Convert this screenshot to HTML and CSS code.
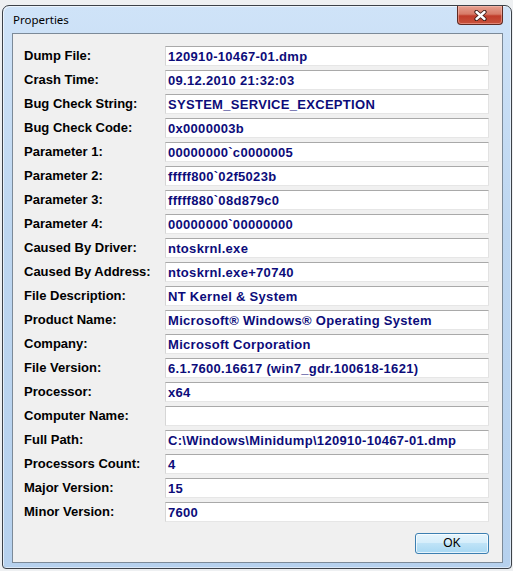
FILE: index.html
```html
<!DOCTYPE html>
<html>
<head>
<meta charset="utf-8">
<link rel="stylesheet" href="styles.css">
</head>
<body>
<div class="window">
  <div class="titlebar">
    <span class="title">Properties</span>
    <div class="close">
      <svg width="15" height="11" viewBox="0 0 15 11">
        <path d="M3.5 2 L11.5 9 M11.5 2 L3.5 9" stroke="#3a1a14" stroke-width="4.2" stroke-linecap="round"/>
        <path d="M3.5 2 L11.5 9 M11.5 2 L3.5 9" stroke="#ffffff" stroke-width="2.4" stroke-linecap="round"/>
      </svg>
    </div>
  </div>
  <div class="client">
    <div class="grid">
      <div class="label">Dump File:</div><div class="field">120910-10467-01.dmp</div>
      <div class="label">Crash Time:</div><div class="field">09.12.2010 21:32:03</div>
      <div class="label">Bug Check String:</div><div class="field">SYSTEM_SERVICE_EXCEPTION</div>
      <div class="label">Bug Check Code:</div><div class="field">0x0000003b</div>
      <div class="label">Parameter 1:</div><div class="field">00000000`c0000005</div>
      <div class="label">Parameter 2:</div><div class="field">fffff800`02f5023b</div>
      <div class="label">Parameter 3:</div><div class="field">fffff880`08d879c0</div>
      <div class="label">Parameter 4:</div><div class="field">00000000`00000000</div>
      <div class="label">Caused By Driver:</div><div class="field">ntoskrnl.exe</div>
      <div class="label">Caused By Address:</div><div class="field">ntoskrnl.exe+70740</div>
      <div class="label">File Description:</div><div class="field">NT Kernel &amp; System</div>
      <div class="label">Product Name:</div><div class="field">Microsoft® Windows® Operating System</div>
      <div class="label">Company:</div><div class="field">Microsoft Corporation</div>
      <div class="label">File Version:</div><div class="field">6.1.7600.16617 (win7_gdr.100618-1621)</div>
      <div class="label">Processor:</div><div class="field">x64</div>
      <div class="label">Computer Name:</div><div class="field"></div>
      <div class="label">Full Path:</div><div class="field">C:\Windows\Minidump\120910-10467-01.dmp</div>
      <div class="label">Processors Count:</div><div class="field">4</div>
      <div class="label">Major Version:</div><div class="field">15</div>
      <div class="label">Minor Version:</div><div class="field">7600</div>
    </div>
    <div class="buttons">
      <div class="ok">OK</div>
    </div>
  </div>
</div>
</body>
</html>
```

FILE: styles.css
```css
html, body {
  margin: 0;
  padding: 0;
}
body {
  width: 513px;
  height: 571px;
  overflow: hidden;
  background: #eef0f2;
}
.window {
  box-sizing: border-box;
  margin: 5px 0 0 2px;
  width: 510px;
  height: 564px;
  border: 1px solid #3c4148;
  border-radius: 7px 7px 4px 4px;
  padding: 0 8px 5px 9px;
  background: linear-gradient(to bottom, #cfe3f8 0%, #bdd6f0 40%, #b6d1ee 100%);
  box-shadow: inset 1px 1px 0 rgba(255,255,255,0.6), inset -1px -1px 0 rgba(255,255,255,0.5);
}
.titlebar {
  height: 27px;
  display: flex;
  align-items: flex-start;
}
.title {
  margin: 6px 0 0 1px;
  font-family: "Noto Sans", "Open Sans", sans-serif;
  font-size: 11.5px;
  line-height: 16px;
  color: #000;
}
.close {
  box-sizing: border-box;
  margin-left: auto;
  width: 46px;
  height: 19px;
  border: 1px solid #5e2a22;
  border-top: none;
  border-radius: 0 0 4px 4px;
  background: linear-gradient(to bottom, #e6a090 0%, #d77a67 45%, #c03c2a 55%, #c8523c 100%);
  box-shadow: inset 0 0 0 1px rgba(255,200,190,0.45);
  display: flex;
  align-items: center;
  justify-content: center;
}
.close svg {
  display: block;
  margin-top: 1px;
}
.client {
  box-sizing: border-box;
  height: 530px;
  border: 1px solid #7c8a98;
  background: #f0f0f0;
  padding: 12px 0 0 11px;
  display: flex;
  flex-direction: column;
}
.grid {
  display: grid;
  grid-template-columns: 141px 324px;
  grid-auto-rows: 20px;
  row-gap: 4px;
}
.label {
  font-family: "Liberation Sans", Arial, sans-serif;
  font-weight: bold;
  font-size: 13px;
  line-height: 20px;
  color: #000;
  white-space: nowrap;
}
.field {
  box-sizing: border-box;
  height: 20px;
  background: #fff;
  border-top: 1px solid #a9a9a9;
  border-left: 1px solid #d6d6d6;
  border-right: 1px solid #e2e2e2;
  border-bottom: 1px solid #e6e6e6;
  padding: 0 0 0 2px;
  font-family: "Liberation Sans", Arial, sans-serif;
  font-weight: bold;
  font-size: 13px;
  letter-spacing: 0.3px;
  line-height: 19px;
  color: #0c0c7a;
  white-space: nowrap;
  overflow: hidden;
}
.buttons {
  margin-top: 11px;
  width: 465px;
  display: flex;
  justify-content: flex-end;
}
.ok {
  box-sizing: border-box;
  width: 74px;
  height: 21px;
  border: 1px solid #3c7fb1;
  border-radius: 3px;
  background: linear-gradient(to bottom, #e6f5fd 0%, #d6eefb 45%, #bfe3f7 50%, #a8d8f3 100%);
  box-shadow: inset 0 0 0 1px rgba(255,255,255,0.7);
  font-family: "Liberation Sans", Arial, sans-serif;
  font-size: 12px;
  line-height: 19px;
  text-align: center;
  color: #000;
}
```
